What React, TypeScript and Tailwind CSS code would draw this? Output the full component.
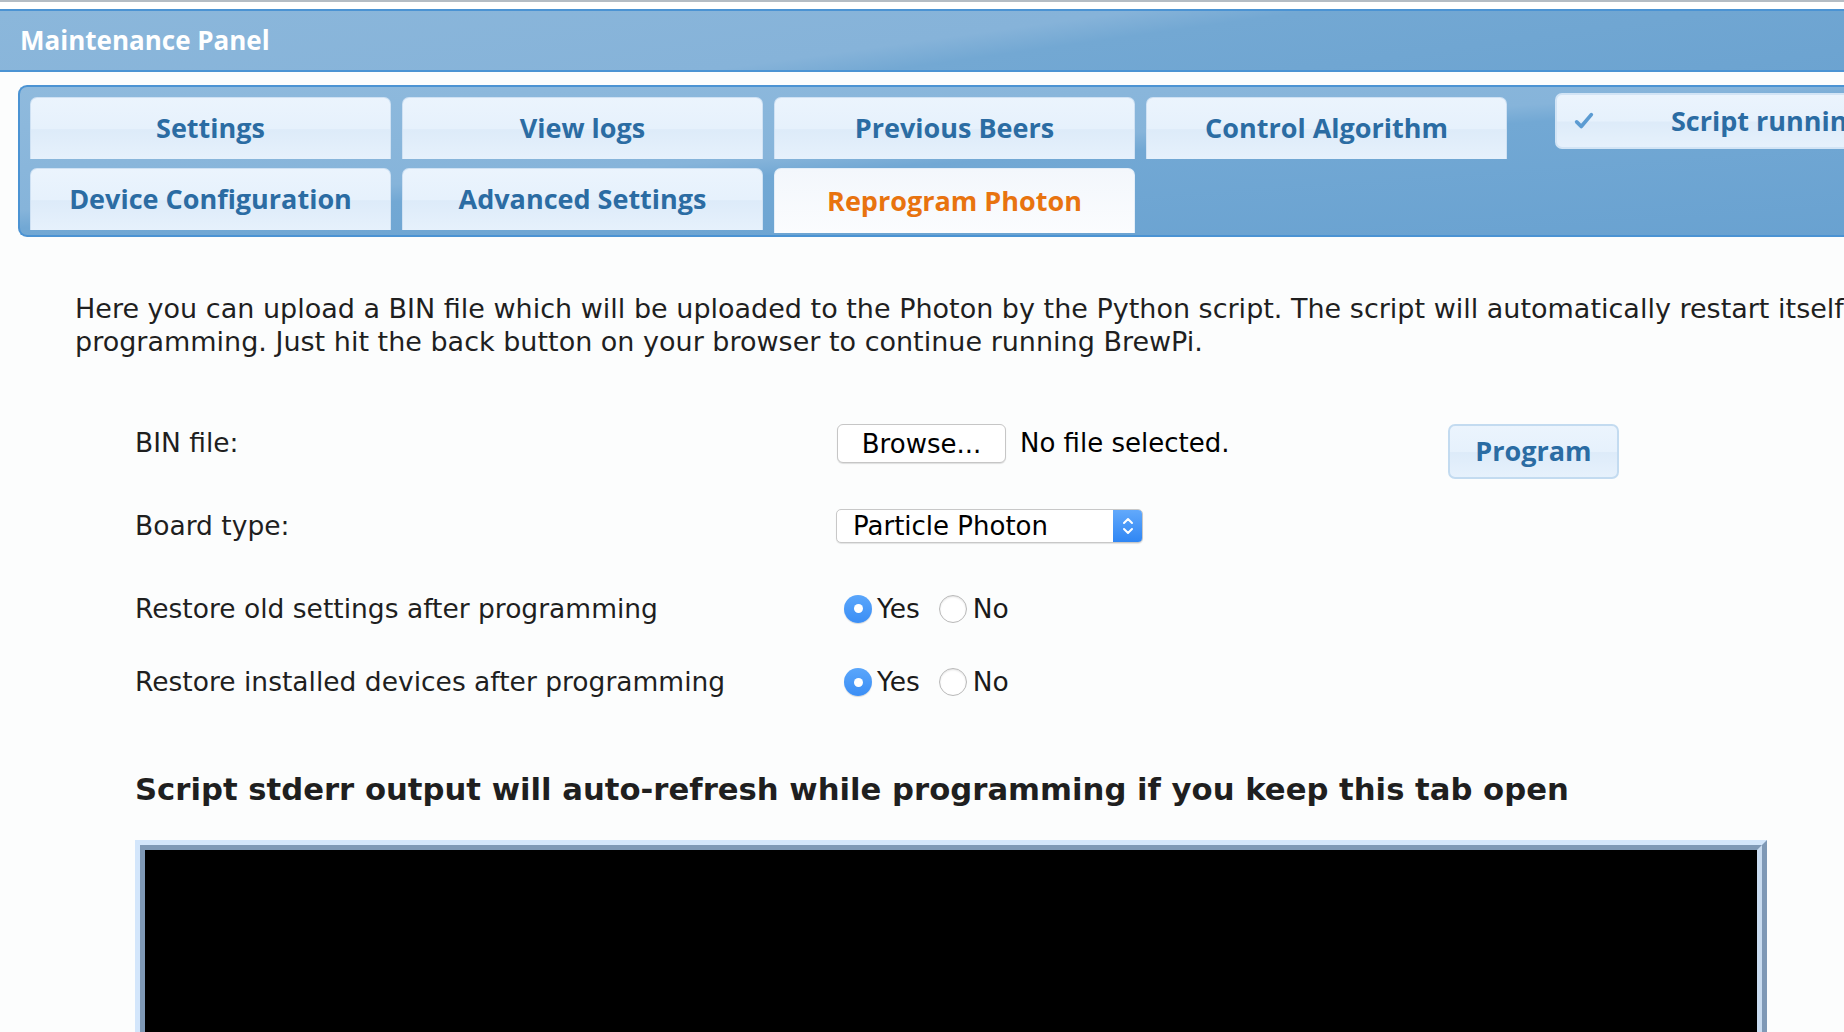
import React from "react";

const tabBase =
  "h-[62px] w-[361px] rounded-t-[7px] border border-b-0 border-[#cfe1f3] flex items-center justify-center text-[27px] font-bold bg-[linear-gradient(#ebf4fd_0%,#e6f1fc_50%,#ddebf9_52%,#e6f1fc_100%)] text-[#2b6ca3]";

function Tab({ label, active }: { label: string; active?: boolean }) {
  if (active) {
    return (
      <div className="h-[65px] w-[361px] rounded-t-[7px] border border-b-0 border-[#e4eef8] flex items-center justify-center text-[27px] font-bold bg-[linear-gradient(#f3f7fc,#fbfcfe)] text-[#e8730f]">
        {label}
      </div>
    );
  }
  return <div className={tabBase}>{label}</div>;
}

function Radio({ checked }: { checked?: boolean }) {
  if (checked) {
    return (
      <span className="block w-[28px] h-[28px] rounded-full bg-[linear-gradient(#5aa6fb,#3b8ef5)] flex items-center justify-center shadow-[0_1px_1px_rgba(0,0,0,0.15)]">
        <span className="block w-[9px] h-[9px] rounded-full bg-white" />
      </span>
    );
  }
  return (
    <span className="block w-[28px] h-[28px] rounded-full bg-white border border-[#b9b9b9] shadow-[inset_0_1px_2px_rgba(0,0,0,0.12)]" />
  );
}

function YesNo() {
  return (
    <div className="flex items-center text-[26.5px] text-[#1a1a1a]">
      <span className="ml-[7px]">
        <Radio checked />
      </span>
      <span className="ml-[5px]">Yes</span>
      <span className="ml-[19px]">
        <Radio />
      </span>
      <span className="ml-[6px]">No</span>
    </div>
  );
}

export default function App() {
  return (
    <div
      className="w-[1844px] h-[1032px] overflow-hidden bg-[#fcfdfd] text-[#222]"
      style={{ fontFamily: '"DejaVu Sans", Verdana, sans-serif' }}
    >
      <div className="w-[2100px]">
        {/* top strip */}
        <div className="h-[2px] bg-[#b4bcc4]" />
        <div className="h-[7px] bg-white" />

        {/* header */}
        <div className="h-[63px] border-y-2 border-[#4b93d3] bg-[linear-gradient(172deg,#8bb7db_0%,#86b3d9_45%,#73a8d3_52%,#6aa2d0_100%)] flex items-center pl-[20px]">
          <span
            className="text-white text-[26px] font-bold"
            style={{ fontFamily: '"Open Sans", sans-serif' }}
          >
            Maintenance Panel
          </span>
        </div>

        {/* tab container */}
        <div
          className="mt-[13px] ml-[18px] h-[152px] rounded-l-[9px] border-2 border-r-0 border-[#4b93d3] bg-[linear-gradient(176deg,#8fbadd_0%,#86b4da_42%,#72a8d4_48%,#68a1d0_100%)] pl-[10px] pt-[10px]"
          style={{ fontFamily: '"Open Sans", sans-serif' }}
        >
          <div className="flex items-start gap-[11px]">
            <Tab label="Settings" />
            <Tab label="View logs" />
            <Tab label="Previous Beers" />
            <Tab label="Control Algorithm" />
            <div className="-mt-[4px] ml-[37px] h-[56px] w-[400px] rounded-[7px] border-2 border-[#d2e4f5] bg-[linear-gradient(#ebf4fd_0%,#e6f1fc_50%,#ddebf9_52%,#e6f1fc_100%)] flex items-center">
              <svg
                width="22"
                height="22"
                viewBox="0 0 24 24"
                className="ml-[16px]"
                fill="none"
                stroke="#5b9bd2"
                strokeWidth="4"
                strokeLinecap="round"
                strokeLinejoin="round"
              >
                <path d="M4 13l5 5L20 5" />
              </svg>
              <span className="ml-[76px] text-[27px] font-bold text-[#2b6ca3]">
                Script running
              </span>
            </div>
          </div>
          <div className="flex items-start gap-[11px] mt-[9px]">
            <Tab label="Device Configuration" />
            <Tab label="Advanced Settings" />
            <Tab label="Reprogram Photon" active />
          </div>
        </div>

        {/* intro */}
        <p className="ml-[75px] mt-[55px] w-[2000px] text-[27px] leading-[33px] text-[#1f1f1f]">
          Here you can upload a BIN file which will be uploaded to the Photon by the Python script. The
          script will automatically restart itself after
          <br />
          programming. Just hit the back button on your browser to continue running BrewPi.
        </p>

        {/* form */}
        <div className="ml-[135px] mt-[63px] w-[1600px] text-[26.5px] text-[#1f1f1f]">
          <div className="flex items-start h-[61px]">
            <div className="w-[702px] pt-[2px]">BIN file:</div>
            <div className="w-[611px] mt-[3px] flex items-center">
              <button className="w-[169px] h-[39px] rounded-[6px] border border-[#c6c6c6] bg-white shadow-[0_1px_1px_rgba(0,0,0,0.12)] text-[26px] text-black">
                Browse...
              </button>
              <span className="ml-[14px] text-[26px] text-black">No file selected.</span>
            </div>
            <button
              className="mt-[3px] w-[171px] h-[55px] rounded-[7px] border-2 border-[#c3dbf0] bg-[linear-gradient(#ebf4fd_0%,#e6f1fc_50%,#ddebf9_52%,#e6f1fc_100%)] text-[27px] font-bold text-[#2b6ca3]"
              style={{ fontFamily: '"Open Sans", sans-serif' }}
            >
              Program
            </button>
          </div>

          <div className="flex items-center h-[88px]">
            <div className="w-[701px]">Board type:</div>
            <div className="w-[307px] h-[34px] rounded-[5px] border border-[#c8c8c8] bg-white flex shadow-[0_1px_1px_rgba(0,0,0,0.1)] overflow-hidden">
              <span className="flex-1 pl-[16px] leading-[32px] text-[26px] text-black">Particle Photon</span>
              <span className="w-[29px] bg-[linear-gradient(#62a9fb,#2f86f4)] flex items-center justify-center">
                <svg width="14" height="22" viewBox="0 0 14 22" fill="none" stroke="white" strokeWidth="2" strokeLinecap="round" strokeLinejoin="round">
                  <path d="M3 8l4-4 4 4" />
                  <path d="M3 14l4 4 4-4" />
                </svg>
              </span>
            </div>
          </div>

          <div className="flex items-center h-[77px]">
            <div className="w-[702px]">Restore old settings after programming</div>
            <YesNo />
          </div>

          <div className="flex items-center h-[70px]">
            <div className="w-[702px]">Restore installed devices after programming</div>
            <YesNo />
          </div>

          <h2 className="mt-[53px] text-[30.7px] font-bold text-[#1f1f1f] leading-[40px]">
            Script stderr output will auto-refresh while programming if you keep this tab open
          </h2>

          <div className="mt-[30px] w-[1632px] h-[300px] border-[5px] border-t-[#d3e6fb] border-l-[#d3e6fb] border-r-[#7f99b6] border-b-[#7f99b6]">
            <div className="h-full border-[5px] border-t-[#7f99b6] border-l-[#7f99b6] border-r-[#c9dcf0] border-b-[#c9dcf0] bg-black" />
          </div>
        </div>
      </div>
    </div>
  );
}
